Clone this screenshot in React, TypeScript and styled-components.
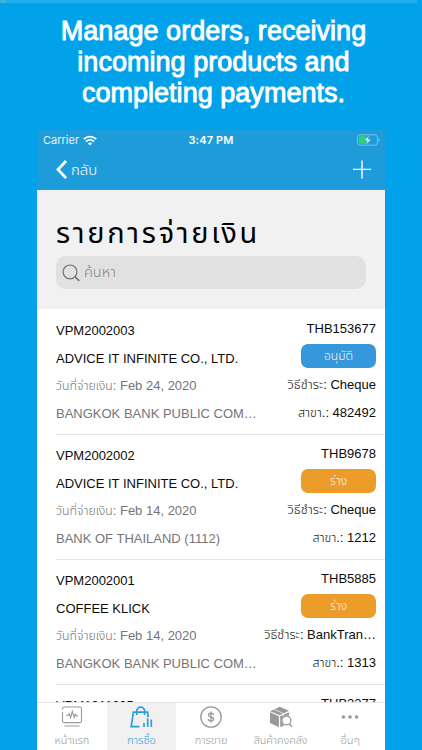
import React from "react";
import styled, { createGlobalStyle } from "styled-components";

const Global = createGlobalStyle`
  * { box-sizing: border-box; }
  body { margin: 0; background: #01a2ea; font-family: "Liberation Sans", "Noto Sans Thai", sans-serif; }
`;

const Page = styled.div`
  width: 422px;
  height: 750px;
  overflow: hidden;
  background: #01a2ea;
  display: flex;
  flex-direction: column;
`;
const Progress = styled.div`
  height: 3px;
  width: 417px;
  background: linear-gradient(90deg, #38b6d6 6px, #20aeec 6px);
`;
const Headline = styled.h1`
  margin: 0;
  padding-top: 13px;
  height: 127px;
  padding-left: 5px;
  text-align: center;
  font-size: 27px;
  font-weight: 400;
  line-height: 31px;
  letter-spacing: 0.03px;
  color: #fff;
  -webkit-text-stroke: 0.9px #fff;
`;
const Phone = styled.div`
  margin-left: 37px;
  width: 348px;
  height: 620px;
  display: flex;
  flex-direction: column;
  background: #fff;
`;
const Header = styled.header`
  height: 60px;
  flex: none;
  background: #1e9cd9;
  color: #fff;
`;
const StatusBar = styled.div`
  height: 20px;
  padding: 0 6px 0 6px;
  display: grid;
  grid-template-columns: 1fr auto 1fr;
  align-items: center;
  font: 11.2px/20px Inter, sans-serif;
`;
const Carrier = styled.div`
  display: flex;
  align-items: center;
  gap: 4px;
  font-size: 11px;
  color: #e4f4fc;
`;
const Clock = styled.div`
  font-weight: 600;
  font-size: 11px;
  letter-spacing: 0.15px;
`;
const Right = styled.div`
  display: flex;
  justify-content: flex-end;
  margin-right: -1px;
`;
const NavBar = styled.div`
  height: 40px;
  padding: 0 13px 0 18px;
  display: flex;
  align-items: center;
  justify-content: space-between;
`;
const Back = styled.div`
  display: flex;
  align-items: center;
  gap: 3px;
`;
const Thai = styled.span<{ $size: number; $spacing?: number; $weight?: number }>`
  font-size: ${(p) => p.$size}px;
  letter-spacing: ${(p) => p.$spacing ?? 0}px;
  font-weight: ${(p) => p.$weight ?? 300};
  white-space: nowrap;
`;
const TitleArea = styled.section`
  height: 119px;
  flex: none;
  padding: 22px 19px 0;
  background: #f1f1f1;
`;
const Title = styled.div`
  height: 44px;
  line-height: 42px;
  color: #000;
`;
const Search = styled.div`
  height: 33px;
  width: 310px;
  border-radius: 10px;
  background: #e1e1e1;
  display: flex;
  align-items: center;
  gap: 4px;
  padding-left: 6px;
  color: #858585;
`;
const List = styled.main`
  flex: 1;
  min-height: 0;
  overflow: hidden;
  padding-top: 1px;
`;
const Row = styled.article`
  height: 125px;
  margin-left: 19px;
  padding-right: 9px;
  border-bottom: 1px solid #e6e6e6;
  display: flex;
  justify-content: space-between;
  font-size: 13px;
  color: #0c0c0c;
`;
const Column = styled.div<{ $end?: boolean }>`
  display: flex;
  flex-direction: column;
  align-items: ${(p) => (p.$end ? "flex-end" : "flex-start")};
  padding-top: ${(p) => (p.$end ? 4.5 : 7.3)}px;
`;
const Line = styled.div<{ $muted?: boolean }>`
  height: 27.6px;
  line-height: 27.6px;
  color: ${(p) => (p.$muted ? "#757575" : "inherit")};
  white-space: nowrap;
`;
const Badge = styled.div<{ $color: string }>`
  width: 75px;
  height: 24px;
  margin: 2px 0 3px;
  border-radius: 7px;
  background: ${(p) => p.$color};
  color: #fff3e4;
  text-align: center;
  line-height: 24px;
`;
const TabBar = styled.nav`
  height: 48px;
  flex: none;
  display: grid;
  grid-template-columns: repeat(5, 1fr);
  border-top: 1px solid #e4e4e4;
`;
const Tab = styled.div<{ $active?: boolean }>`
  display: flex;
  flex-direction: column;
  align-items: center;
  padding-top: 3px;
  background: ${(p) => (p.$active ? "#f1f1f1" : "#fff")};
  color: ${(p) => (p.$active ? "#2a9fd8" : "#999")};
`;
const TabLabel = styled.div`
  height: 22px;
  line-height: 22px;
`;

const Wifi = () => (
  <svg width="14" height="11" viewBox="0 0 14 11" fill="none" stroke="#fff" strokeWidth="1.9">
    <path d="M.8 4.2C4.3.7 9.7.7 13.2 4.2M3.1 6.5C5.3 4.3 8.7 4.3 10.9 6.5" />
    <path d="M7 10.6 4.9 8.4C6.1 7.3 7.9 7.3 9.1 8.4Z" fill="#fff" stroke="none" />
  </svg>
);
const Battery = () => (
  <svg width="23" height="12" viewBox="0 0 23 12">
    <rect x=".5" y=".8" width="20" height="10.4" rx="2.8" fill="none" stroke="#79c3e8" />
    <path d="M22 4.5v3" stroke="#79c3e8" strokeWidth="1.2" />
    <rect x="2" y="2.3" width="7.5" height="7.4" rx="1.3" fill="#32d266" />
    <path d="M12.3 1.3 7.2 6.6h3.1l-1.4 4.1 5.3-5.5H11z" fill="#fff" stroke="#1e9cd9" strokeWidth=".5" />
  </svg>
);
const BackIcon = () => (
  <svg width="13" height="20" viewBox="0 0 13 20" fill="none" stroke="#fff" strokeWidth="2.8">
    <path d="M11 1 3 9.5l8 8.6" />
  </svg>
);
const PlusIcon = () => (
  <svg width="20" height="20" viewBox="0 0 20 20" stroke="#fff" strokeWidth="1.4">
    <path d="M1 9.4h18M10 .4v18" />
  </svg>
);
const SearchIcon = () => (
  <svg width="18" height="18" viewBox="0 0 18 18" fill="none" stroke="#737373" strokeWidth="1.2">
    <circle cx="8" cy="7.9" r="6.9" />
    <path d="m12.8 12.6 4.5 4.3" strokeWidth="1.5" />
  </svg>
);

const icons = {
  home: (
    <g strokeWidth="1.1">
      <path d="M2.5 3.5V2.8a1.8 1.8 0 0 1 1.8-1.8h15.4a1.8 1.8 0 0 1 1.8 1.8v12a1.8 1.8 0 0 1-1.8 1.8H4.3a1.8 1.8 0 0 1-1.8-1.8V6M4.5 20h15" />
      <path d="M6 9.3h2.2l1-1.8 1.4 4.2 1.7-6.4 1.8 6.1 1.2-3.1 1 1.6H18" />
    </g>
  ),
  buy: (
    <g strokeWidth="1.7">
      <path d="M10.5 20.7H2.2L4.4 6.2h14.2l.6 5M7.8 9V5a3.9 3.9 0 0 1 7.8 0v4M15 17v4M18.7 12.3V21M22.3 13.6V21" />
    </g>
  ),
  sell: (
    <g strokeWidth="1.3">
      <circle cx="12" cy="11" r="10.2" />
      <path d="M14.5 9c-.2-2.5-5-2.5-5 0 0 2.6 5.2 1.4 5.2 4 0 2.7-5.4 2.6-5.4 0M12 5.6v10.8" />
    </g>
  ),
  stock: (
    <g stroke="none" fill="#999">
      <path d="M1 5.2 10.8.8l9.2 4-9.3 4.5z" />
      <path d="M1 6.3l8.9 4v11L1 17zM11.2 10.3l8.9-4v3.4c-4-1.9-8.3 1.8-7.4 6 .4 2 1.6 3.2 2.7 4L11.2 21z" />
      <path d="m5 3.4 9.6 4.1v3" fill="none" stroke="#fff" strokeWidth=".7" />
      <g fill="#fff" stroke="#999" strokeWidth="1.3">
        <circle cx="17.4" cy="14.4" r="4.4" />
        <path d="m20.3 17.8 2.6 3" />
      </g>
    </g>
  ),
  more: (
    <g fill="#999" stroke="none">
      <circle cx="5.4" cy="11" r="1.8" />
      <circle cx="12" cy="11" r="1.8" />
      <circle cx="18.6" cy="11" r="1.8" />
    </g>
  ),
};
const TabIcon = ({ name }: { name: keyof typeof icons }) => (
  <svg width="24" height="22" viewBox="0 0 24 22" fill="none" stroke="currentColor">
    {icons[name]}
  </svg>
);

const payments = [
  { no: "VPM2002003", vendor: "ADVICE IT INFINITE CO., LTD.", date: "Feb 24, 2020", bank: "BANGKOK BANK PUBLIC COM…", total: "THB153677", approved: true, method: "Cheque", branch: "482492" },
  { no: "VPM2002002", vendor: "ADVICE IT INFINITE CO., LTD.", date: "Feb 14, 2020", bank: "BANK OF THAILAND (1112)", total: "THB9678", approved: false, method: "Cheque", branch: "1212" },
  { no: "VPM2002001", vendor: "COFFEE KLICK", date: "Feb 14, 2020", bank: "BANGKOK BANK PUBLIC COM…", total: "THB5885", approved: false, method: "BankTran…", branch: "1313" },
  { no: "VPM1911005", vendor: "", date: "", bank: "", total: "THB2277", approved: false, method: "", branch: "" },
];
const tabs: { icon: keyof typeof icons; label: string; size: number }[] = [
  { icon: "home", label: "หน้าแรก", size: 11 },
  { icon: "buy", label: "การซื้อ", size: 11.4 },
  { icon: "sell", label: "การขาย", size: 11 },
  { icon: "stock", label: "สินค้าคงคลัง", size: 10.8 },
  { icon: "more", label: "อื่นๆ", size: 11 },
];

export default function App() {
  return (
    <Page>
      <Global />
      <Progress />
      <Headline>
        Manage orders, receiving<br />incoming products and<br />completing payments.
      </Headline>
      <Phone>
        <Header>
          <StatusBar>
            <Carrier>Carrier <Wifi /></Carrier>
            <Clock>3:47 PM</Clock>
            <Right><Battery /></Right>
          </StatusBar>
          <NavBar>
            <Back><BackIcon /><Thai $size={15}>กลับ</Thai></Back>
            <PlusIcon />
          </NavBar>
        </Header>
        <TitleArea>
          <Title><Thai $size={29} $spacing={2.7} $weight={400}>รายการจ่ายเงิน</Thai></Title>
          <Search><SearchIcon /><Thai $size={14.5}>ค้นหา</Thai></Search>
        </TitleArea>
        <List>
          {payments.map((p) => (
            <Row key={p.no}>
              <Column>
                <Line>{p.no}</Line>
                {p.vendor && (
                  <>
                    <Line>{p.vendor}</Line>
                    <Line $muted><Thai $size={12.3}>วันที่จ่ายเงิน</Thai>: {p.date}</Line>
                    <Line $muted>{p.bank}</Line>
                  </>
                )}
              </Column>
              <Column $end>
                <Line>{p.total}</Line>
                {p.vendor && (
                  <>
                    <Badge $color={p.approved ? "#3698dc" : "#ec9c29"}>
                      <Thai $size={12}>{p.approved ? "อนุมัติ" : "ร่าง"}</Thai>
                    </Badge>
                    <Line><Thai $size={12.8}>วิธีชำระ</Thai>: {p.method}</Line>
                    <Line><Thai $size={12.4}>สาขา</Thai>.: {p.branch}</Line>
                  </>
                )}
              </Column>
            </Row>
          ))}
        </List>
        <TabBar>
          {tabs.map((t) => (
            <Tab key={t.icon} $active={t.icon === "buy"}>
              <TabIcon name={t.icon} />
              <TabLabel><Thai $size={t.size} $spacing={-0.1}>{t.label}</Thai></TabLabel>
            </Tab>
          ))}
        </TabBar>
      </Phone>
    </Page>
  );
}
